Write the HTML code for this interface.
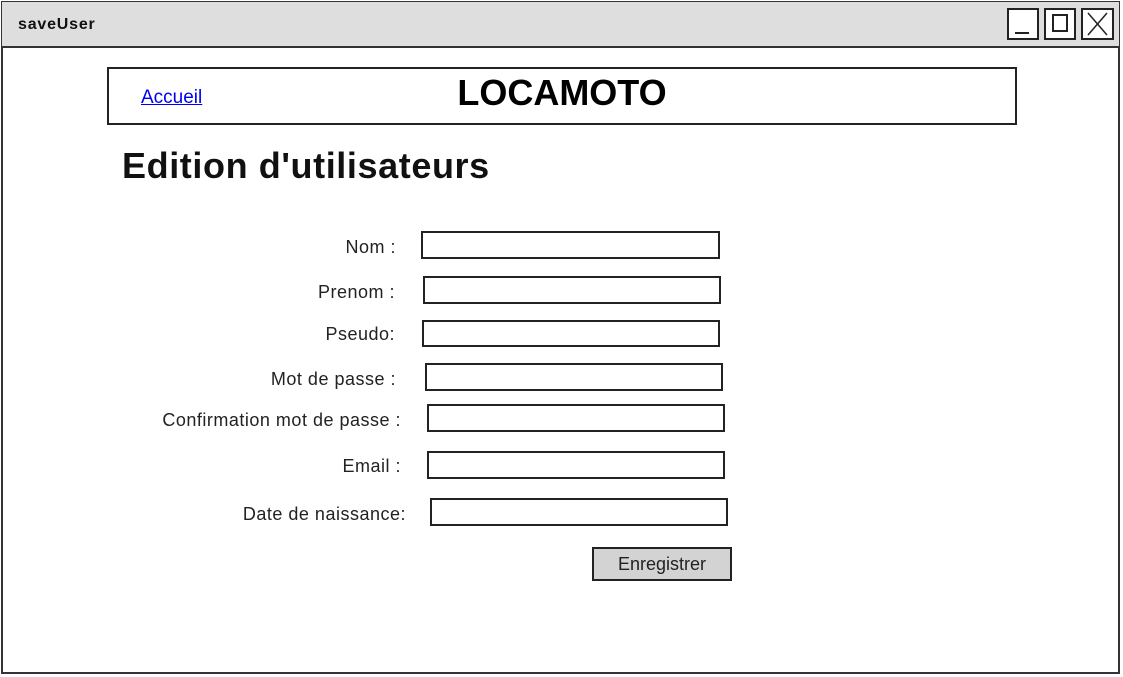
<!DOCTYPE html>
<html><head><style>
body{margin:0;width:1123px;height:677px;background:#fff;position:relative;overflow:hidden;font-family:"Liberation Sans",sans-serif}
.a{position:absolute}
.box{position:absolute;border:2px solid #222;box-sizing:border-box;background:#fff}
.lbl{position:absolute;font-size:18px;color:#222;text-align:right;width:320px;line-height:20px;letter-spacing:0.5px}
</style></head><body>
<div class="a" style="left:1px;top:1px;width:1119px;height:673px;border:2px solid #333;box-sizing:border-box"></div>
<div class="a" style="left:2px;top:2px;width:1117px;height:44px;background:#dedede;border-bottom:2px solid #333"></div>
<div class="a" style="left:18px;top:16px;font-size:16px;font-weight:bold;color:#111;letter-spacing:0.8px">saveUser</div>
<div class="box" style="left:1007px;top:8px;width:32px;height:32px"></div>
<div class="a" style="left:1015px;top:32px;width:14px;height:2px;background:#222"></div>
<div class="box" style="left:1044px;top:8px;width:32px;height:32px"></div>
<div class="a" style="left:1052px;top:14px;width:16px;height:18px;border:2px solid #222;box-sizing:border-box"></div>
<div class="box" style="left:1081px;top:8px;width:33px;height:32px"></div>
<svg class="a" style="left:1081px;top:8px" width="33" height="32"><path d="M7 5L26 27M26 5L7 27" stroke="#222" stroke-width="1.5"/></svg>
<div class="box" style="left:107px;top:67px;width:910px;height:58px"></div>
<div class="a" style="left:141px;top:87px;font-size:19px;color:#00e;text-decoration:underline">Accueil</div>
<div class="a" style="left:362px;top:72px;width:400px;text-align:center;font-size:36px;font-weight:bold;color:#000">LOCAMOTO</div>
<div class="a" style="left:122px;top:145px;font-size:36px;font-weight:bold;color:#111;letter-spacing:0.6px">Edition d'utilisateurs</div>

<div class="lbl" style="left:76px;top:237px">Nom :</div>
<div class="box" style="left:421px;top:231px;width:299px;height:28px"></div>
<div class="lbl" style="left:75px;top:282px">Prenom :</div>
<div class="box" style="left:423px;top:276px;width:298px;height:28px"></div>
<div class="lbl" style="left:75px;top:324px">Pseudo:</div>
<div class="box" style="left:422px;top:320px;width:298px;height:27px"></div>
<div class="lbl" style="left:76px;top:369px">Mot de passe :</div>
<div class="box" style="left:425px;top:363px;width:298px;height:28px"></div>
<div class="lbl" style="left:81px;top:410px">Confirmation mot de passe :</div>
<div class="box" style="left:427px;top:404px;width:298px;height:28px"></div>
<div class="lbl" style="left:81px;top:456px">Email :</div>
<div class="box" style="left:427px;top:451px;width:298px;height:28px"></div>
<div class="lbl" style="left:86px;top:504px">Date de naissance:</div>
<div class="box" style="left:430px;top:498px;width:298px;height:28px"></div>

<div class="box" style="left:592px;top:547px;width:140px;height:34px;background:#d3d3d3;text-align:center;font-size:18px;line-height:30px;color:#222">Enregistrer</div>
</body></html>
